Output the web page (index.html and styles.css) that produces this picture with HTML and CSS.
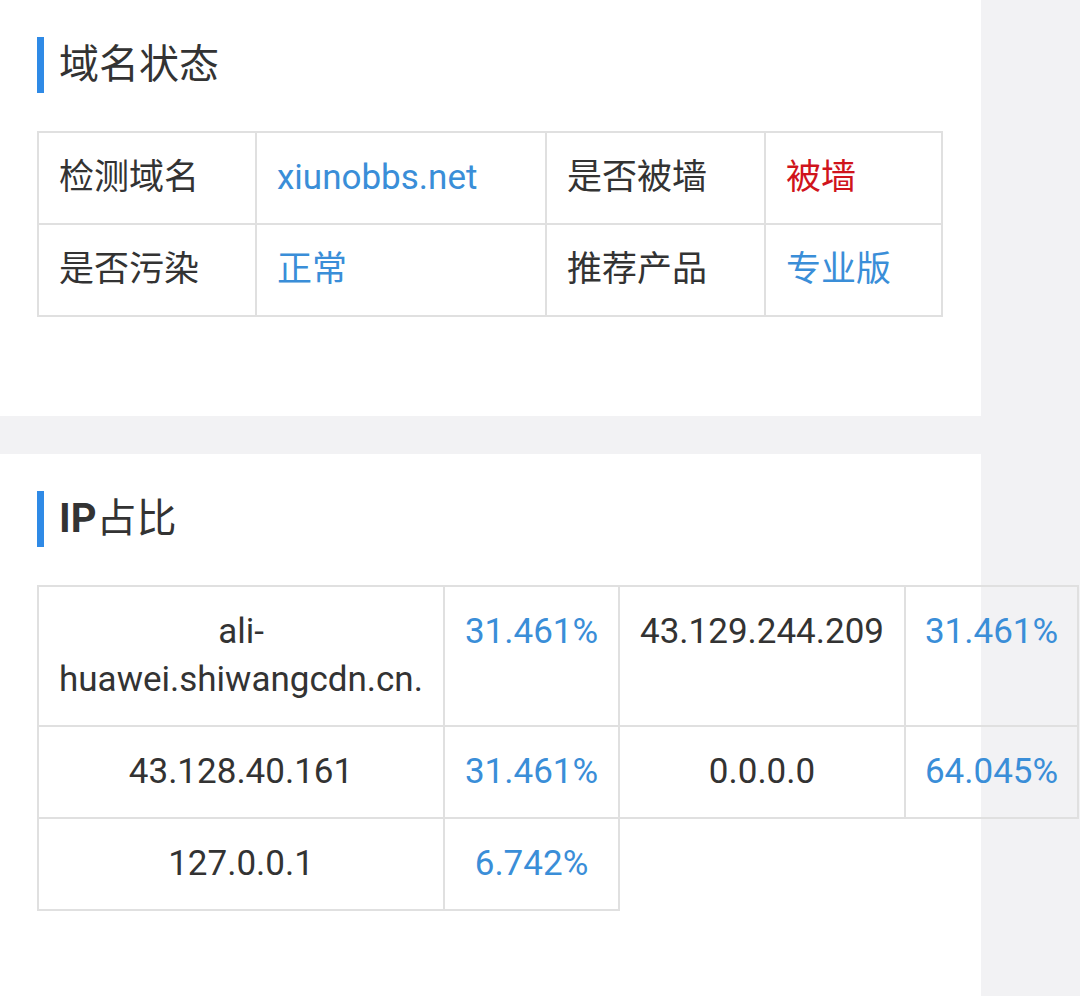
FILE: index.html
```html
<!DOCTYPE html>
<html lang="zh-CN">
<head>
<meta charset="utf-8">
<title>域名状态</title>
<link rel="stylesheet" href="styles.css">
</head>
<body>
<section class="card card-first">
  <h2 class="title">域名状态</h2>
  <table class="info">
    <colgroup>
      <col class="c1"><col class="c2"><col class="c3"><col class="c4">
    </colgroup>
    <tr>
      <td>检测域名</td>
      <td class="blue">xiunobbs.net</td>
      <td>是否被墙</td>
      <td class="red">被墙</td>
    </tr>
    <tr>
      <td>是否污染</td>
      <td class="blue">正常</td>
      <td>推荐产品</td>
      <td class="blue">专业版</td>
    </tr>
  </table>
</section>
<section class="card card-second">
  <h2 class="title"><b>IP</b>占比</h2>
  <table class="ips">
    <colgroup>
      <col class="d1"><col class="d2"><col class="d3"><col class="d4">
    </colgroup>
    <tr>
      <td>ali-<br>huawei.shiwangcdn.cn.</td>
      <td class="blue">31.461%</td>
      <td>43.129.244.209</td>
      <td class="blue">31.461%</td>
    </tr>
    <tr>
      <td>43.128.40.161</td>
      <td class="blue">31.461%</td>
      <td>0.0.0.0</td>
      <td class="blue">64.045%</td>
    </tr>
    <tr>
      <td>127.0.0.1</td>
      <td class="blue">6.742%</td>
    </tr>
  </table>
</section>
</body>
</html>
```
FILE: styles.css
```css
html, body {
  margin: 0;
  padding: 0;
}
body {
  background: #f2f2f4;
  font-family: Roboto, "Noto Sans CJK SC", sans-serif;
  color: #333;
  width: 1080px;
  height: 996px;
  overflow: hidden;
}
.card {
  background: #fff;
  width: 981px;
  box-sizing: border-box;
}
.card-first {
  padding: 37px 0 99px 0;
}
.card-second {
  margin-top: 38px;
  padding: 37px 0 100px 0;
}
.title {
  margin: 0 0 0 37px;
  height: 56px;
  border-left: 7px solid #2f8ae6;
  padding-left: 15px;
  font-size: 40px;
  line-height: 56px;
  font-weight: normal;
  color: #333;
}
.title b {
  font-weight: bold;
}
table {
  border-collapse: collapse;
  table-layout: fixed;
  margin-left: 37px;
  font-size: 35px;
}
td {
  border: 2px solid #e0e0e0;
  padding: 21px 20px;
  line-height: 48px;
  vertical-align: top;
}
.info {
  margin-top: 38px;
  width: 904px;
}
.info td {
  text-align: left;
}
.c1 { width: 218px; }
.c2 { width: 290px; }
.c3 { width: 219px; }
.c4 { width: 177px; }
.ips {
  margin-top: 38px;
  width: 1040px;
}
.ips td {
  text-align: center;
  padding-left: 8px;
  padding-right: 8px;
}
.d1 { width: 406px; }
.d2 { width: 175px; }
.d3 { width: 286px; }
.d4 { width: 173px; }
.blue {
  color: #3a8ed8;
}
.red {
  color: #d0141c;
}
```
